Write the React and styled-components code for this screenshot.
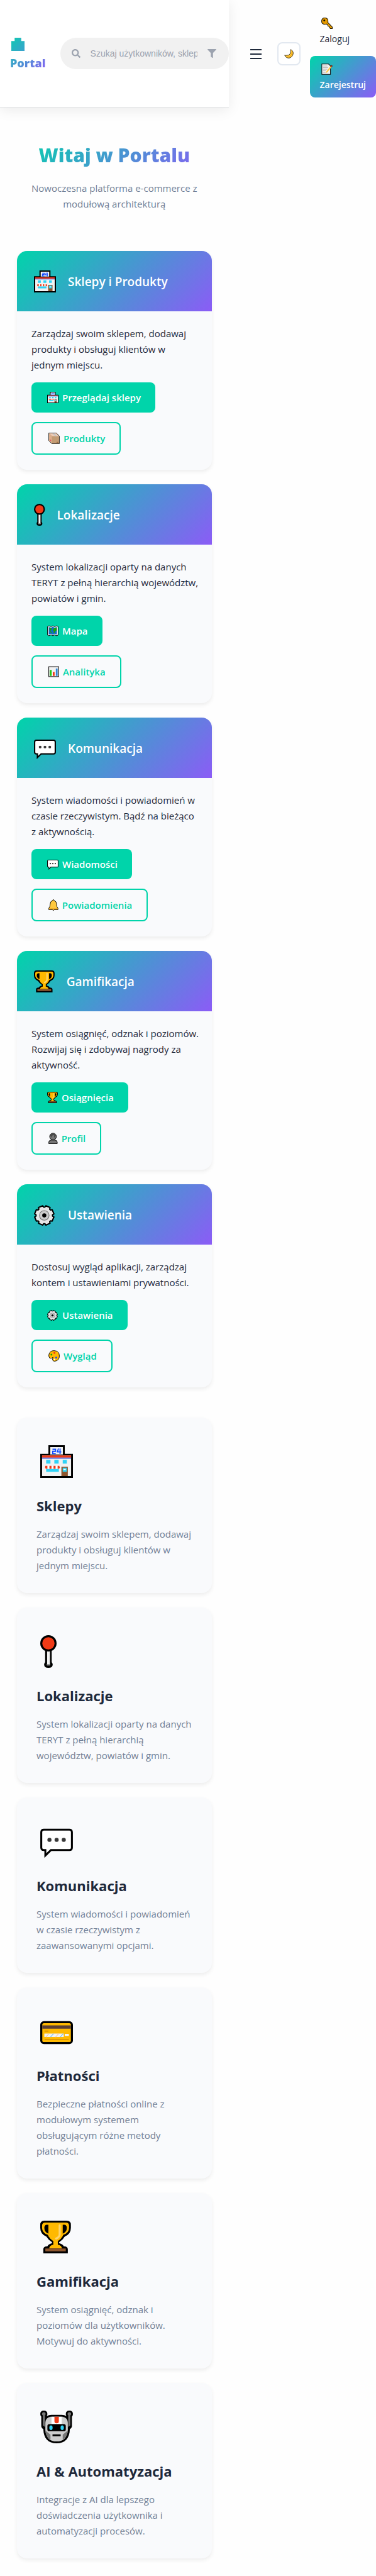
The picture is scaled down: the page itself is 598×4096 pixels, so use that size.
import React from "react";
import styled, { createGlobalStyle, css } from "styled-components";
import { FaFilter, FaSearch } from "react-icons/fa";

const ink = "#1e293b";
const muted = "#718096";
const mint = "#00d4aa";
const gradient = "linear-gradient(135deg, #00d4aa 0%, #8b5cf6 100%)";
const contentWidth = "60.8%";

const GlobalStyle = createGlobalStyle`
  * { box-sizing: border-box; }
  body {
    margin: 0;
    background: #fefefe;
    color: ${ink};
    font-family: "Open Sans", "Noto Sans", sans-serif;
    font-size: 15px;
    line-height: 25px;
  }
  h1, h2, h3, p { margin: 0; }
  a { color: inherit; text-decoration: none; }
  button { font: inherit; color: inherit; cursor: pointer; }
`;

/* ---------- icons ---------- */

const Glyph = styled.svg`
  display: block;
  flex: none;
  height: ${(p) => p.$size}px;
  width: auto;
`;

const Shop = ({ size }) => (
  <Glyph $size={size} viewBox="0 0 32 32" aria-hidden="true">
    <path d="M8 0h16v8.4h8V32H0V8.4h8z" fill="#000" />
    <path d="M9.8 1.8h12.4v7.2H9.8zM1.8 10h28.4v20.2H1.8z" fill="#f2f2f2" />
    <path d="M1.8 10h28.4v2.1H1.8z" fill="#f03a17" />
    <path d="M1.8 12.1h28.4v1H1.8z" fill="#2347e0" />
    <path d="M12 4h3v2h-2.8v2.2h3M17.8 3.3l-1 3.3h3.8M19.4 3.2v5.4" fill="none" stroke="#1049ff" strokeWidth="1.1" />
    <path d="M5.8 14.3H10V18H5.8zM13.8 14.3H18V18h-4.2zM22 14.3h4V18h-4zM5.8 23h12.4v3H5.8z" fill="#2fd3f7" />
    <path d="M5 20.2h14V23H5z" fill="#fff" />
    <path d="M5 20.2h2V23H6q-1.3 0-1.3-1.4zM9 20.2h2V23H9zM13 20.2h2V23h-2zM17 20.2h1.6l.6 1.5q0 1.3-1.2 1.3h-1z" fill="#f03a17" />
    <path d="M20.7 21H27v9.2h-6.3z" fill="#8e562e" />
    <path d="M22 22h4v4h-4z" fill="#2fd3f7" />
    <path d="M22.8 23.2h2.2v1h-2.2z" fill="#fff" />
  </Glyph>
);

const Pin = ({ size }) => (
  <Glyph $size={size} viewBox="0 0 16 32" aria-hidden="true">
    <path d="M4.8 14h6.4v12.4q1 .8 1 2.4 0 3.2-4.2 3.2t-4.2-3.2q0-1.6 1-2.4z" fill="#000" />
    <path d="M6.7 12h2.8v17h-2.8z" fill="#f2f2f2" />
    <path d="M6.4 29h3.2" stroke="#999" strokeWidth="1.4" />
    <circle cx="8" cy="8" r="7" fill="#f03a17" stroke="#000" strokeWidth="2" />
  </Glyph>
);

const Bubble = ({ size }) => (
  <Glyph $size={size} viewBox="0 0 32 32" aria-hidden="true">
    <path d="M3.5 4.5h25q2.5 0 2.5 2.5v15q0 2.5-2.5 2.5H10.4L5 29.8V24.5H3.5Q1 24.5 1 22V7q0-2.5 2.5-2.5z" fill="#fff" stroke="#000" strokeWidth="1.9" />
    <g fill="#383838">
      <circle cx="9" cy="14.5" r="2" />
      <circle cx="16" cy="14.5" r="2" />
      <circle cx="23" cy="14.5" r="2" />
    </g>
  </Glyph>
);

const Trophy = ({ size }) => (
  <Glyph $size={size} viewBox="0 0 30 32" aria-hidden="true">
    <path d="M4 0h22q4 0 4 4v3q0 6-6 8.5-2 3.5-5.5 5.5v1q3.5 1 4.500 3 4 0 4 3v4H3v-4q0-3 4-3 1-2 4.500-3v-1Q8 19 6 15.500 0 13 0 7V4q0-4 4-4z" fill="#000" />
    <path d="M5 1.800h20q3.200 0 3.200 3V7q0 5-5.700 6.800Q21 18 17.200 20v3.500q3.800.8 4 3.500H8.800q.2-2.700 4-3.500V20Q9 18 7.500 13.800 1.800 12 1.800 7V4.800q0-3 3.200-3z" fill="#ffb900" />
    <path d="M8 4H6Q4 4.500 4 7q0 4 4 5.800zM22 4h2q2 .5 2 3 0 4-4 5.800z" fill="#000" />
    <path d="M19 4.500v9q0 2.500-3.500 4" fill="none" stroke="#ffd56b" strokeWidth="2" strokeLinecap="round" />
    <path d="M5 30v-2.800h20V30z" fill="#8e562e" />
  </Glyph>
);

const gearPath = (() => {
  const points = [];
  for (let i = 0; i < 8; i += 1) {
    [[-4, 12], [4, 12], [9, 14.2], [36, 14.2], [41, 12]].forEach(([deg, r]) => {
      const a = ((i * 45 + deg) * Math.PI) / 180;
      points.push(`${(16 + r * Math.sin(a)).toFixed(2)} ${(16 - r * Math.cos(a)).toFixed(2)}`);
    });
  }
  return `M${points.join("L")}Z`;
})();

const Gear = ({ size }) => (
  <Glyph $size={size} viewBox="1 0 32 32" aria-hidden="true">
    <path d={gearPath} transform="translate(0 1)" fill="#e6e6e6" stroke="#000" strokeWidth="1.9" strokeLinejoin="round" />
    <circle cx="16" cy="17" r="7" fill="#ccc" stroke="#767676" strokeWidth="1" />
    <circle cx="16" cy="17" r="3" fill="#000" />
  </Glyph>
);

const CreditCard = ({ size }) => (
  <Glyph $size={size} viewBox="0 0 32 32" aria-hidden="true">
    <rect x="1" y="7" width="30" height="20.5" rx="2.6" fill="#ffb900" stroke="#000" strokeWidth="2" />
    <path d="M2 10.2h28v3.2H2z" fill="#5c3f34" />
    <path d="M4.2 15.8H8M4.2 24H28" stroke="#d88f00" strokeWidth="1" />
    <path d="M4 18.2h19v3.4H4zM24 18.4h4v2h-4z" fill="#f2f2f2" />
    <path d="M5.5 21.6l3-3.4M15 21.6l3-3.4" stroke="#f6c9a0" strokeWidth=".8" />
    <path d="M10 21.6l3-3.4M19.5 21.6l3-3.4" stroke="#7cc4ea" strokeWidth=".8" />
  </Glyph>
);

const Robot = ({ size }) => (
  <Glyph $size={size} viewBox="0 0 32 32" aria-hidden="true">
    <path d="M3.5 0Q7 0 7 3.4q0 1.3-.8 2.2Q8.5 4.2 11 4.2h10q2.5 0 4.8 1.4-.8-.9-.8-2.2Q25 0 28.5 0T32 3.4q0 1.5-1 2.4V15q0 2-2 3Q28.5 32 16 32T3 18q-2-1-2-3V5.8Q0 4.9 0 3.4 0 0 3.5 0z" fill="#000" />
    <circle cx="3.5" cy="3.3" r="1.7" fill="#767676" />
    <circle cx="28.5" cy="3.3" r="1.7" fill="#767676" />
    <path d="M2.6 4.5h2V16l-2-1.5zM29.4 4.5h-2V16l2-1.5z" fill="#767676" />
    <path d="M10 6h12q5 1 5 6v7q-1 11.2-11 11.2T5 19v-7q0-5 5-6z" fill="#ccc" />
    <path d="M5 19.5l5 4v5Q5.2 25.5 5 19.5zM27 19.5l-5 4v5q4.8-3 5-9z" fill="#767676" />
    <path d="M11 6h10v7H11z" fill="#fff" />
    <path d="M13.9 6h4.3v4.4q0 2-2.15 2t-2.15-2z" fill="#f03a17" />
    <rect x="7" y="13.2" width="18" height="7" rx="1.8" fill="#000" />
    <ellipse cx="10.5" cy="16.7" rx="1.6" ry="2.3" fill="#2fd3f7" />
    <ellipse cx="21.5" cy="16.7" rx="1.6" ry="2.3" fill="#2fd3f7" />
    <path d="M12 23.3h8v1.8h-8z" fill="#000" />
  </Glyph>
);

const Box = ({ size }) => (
  <Glyph $size={size} viewBox="0 0 32 32" aria-hidden="true">
    <path d="M1 1h21.5L31 9.5V31H9.5L1 22.5z" fill="#c29b73" stroke="#222" strokeWidth="1.6" />
    <path d="M1.8 1.8H22L30 9.8H10z" fill="#eccab4" />
    <path d="M1.8 2.5L9.8 10v20L1.8 22z" fill="#dcae8c" />
    <path d="M11 1.8h5l8 8h-5z" fill="#c5c5c5" />
    <path d="M4 18l3.5 3.5v3L4 21z" fill="#e8425a" />
    <path d="M23 26h5v2h-5z" fill="#8e562e" />
  </Glyph>
);

const WorldMap = ({ size }) => (
  <Glyph $size={size} viewBox="0 0 32 32" aria-hidden="true">
    <path d="M1 4l4-2 6 2 5-2 5 2 6-2 4 2v24l-4 2-6-2.5-5 2.5-5-2.5L5 30l-4-2z" fill="#f2f2f2" stroke="#000" strokeWidth="1.7" />
    <path d="M4.5 5.5l6.5 1.5 5-2 5 2 6.5-1.5v21L21 24.5 16 27l-5-2.5-6.5 2z" fill="#0f6cc9" />
    <path d="M6 8l7 1-1 4-3 3 4 4-1 4-3-5-2-5zM17 11l4-3 6-1v8l-4 2-2 6-3-2 1-5-3-1z" fill="#16a10b" />
  </Glyph>
);

const BarChart = ({ size }) => (
  <Glyph $size={size} viewBox="0 0 30 32" aria-hidden="true">
    <rect x="1" y="2" width="28" height="28" fill="#f2f2f2" stroke="#111" strokeWidth="1.9" />
    <path d="M4 11h5v17H4z" fill="#16c60c" />
    <path d="M12.5 17h5v11h-5z" fill="#f03a17" />
    <path d="M21 7h5v21h-5z" fill="#2f86d8" />
  </Glyph>
);

const Bell = ({ size }) => (
  <Glyph $size={size} viewBox="0 0 28 32" aria-hidden="true">
    <path d="M14 1q2 0 2 2.3 7 2 7 9.7 0 8 4 12.5V29H17q-1 2-3 2t-3-2H1v-3.5Q5 21 5 13q0-7.7 7-9.7Q12 1 14 1z" fill="#ffc83d" stroke="#000" strokeWidth="1.6" />
    <path d="M1.8 26h24.4v2.2H1.8z" fill="#d67d00" />
  </Glyph>
);

const Person = ({ size }) => (
  <Glyph $size={size} viewBox="0 0 26 32" aria-hidden="true">
    <path d="M1 31v-4q0-5 6-6h12q6 1 6 6v4z" fill="#767676" stroke="#000" strokeWidth="1.6" />
    <circle cx="13" cy="11" r="9.5" fill="#767676" stroke="#000" strokeWidth="1.6" />
    <path d="M4 10Q5 2 13 2t9 8Q17 10 14 6.5 10 10 4 10z" fill="#4a4a4a" />
    <path d="M9 10.5v2.5M17 10.5v2.5" stroke="#111" strokeWidth="1.5" />
  </Glyph>
);

const Palette = ({ size }) => (
  <Glyph $size={size} viewBox="0 0 32 32" aria-hidden="true">
    <path d="M16 1q15 1 15 15 0 13-13 15-5 0-6-3-1-4 1-8Q11 23 4 22.5 1 19 1 14 3 1 16 1z" fill="#ffb900" stroke="#000" strokeWidth="1.6" />
    <circle cx="8.5" cy="12.5" r="2.6" fill="#16a10b" />
    <circle cx="17" cy="7.5" r="2.6" fill="#f03a17" />
    <circle cx="22" cy="21" r="2.6" fill="#1049ff" />
    <circle cx="17" cy="26" r="2.2" fill="#fff" />
  </Glyph>
);

const Key = ({ size }) => (
  <Glyph $size={size} viewBox="0 0 32 32" aria-hidden="true">
    <path d="M10 1q9 0 9 9 0 2-.7 3.5L31 26.5V31h-5l-3-3-1-3-3-1-1-3-3.500-3q-2 1-4.500 1-9 0-9-9 0-9 9-9z" fill="#e59a00" stroke="#1a1200" strokeWidth="1.8" />
    <circle cx="8.5" cy="8" r="2.6" fill="#1a1200" />
  </Glyph>
);

const Memo = ({ size }) => (
  <Glyph $size={size} viewBox="0 0 32 32" aria-hidden="true">
    <path d="M1.5 1.5h19L26 7v23.5H1.5z" fill="#f2f2f2" stroke="#111" strokeWidth="1.8" />
    <path d="M5 7h12M5 11.5h14M5 16h12M5 20.5h8M5 25h7" stroke="#a0a0a0" strokeWidth="1.3" />
    <path d="M13.5 23.5L26 7.5l3 2.5-12.5 15.5-3.5 1z" fill="#ffc83d" />
    <path d="M26 7.5l2-2.5q3-.5 3 2.5l-2 2.5z" fill="#f03a17" stroke="#111" />
  </Glyph>
);

const Moon = ({ size }) => (
  <Glyph $size={size} viewBox="0 0 32 32" aria-hidden="true">
    <path d="M22 1.5Q31 6 30.5 15 29 27 17 30.5 6 31 1.5 21q5 1.5 8 0 6 1.5 10-4 4-6 2.5-15.5z" fill="#ffc83d" stroke="#2a1c00" strokeWidth="1.8" strokeLinejoin="round" />
    <path d="M26 9q1 8-4 14-5 4-11 3.5" fill="none" stroke="#f0a000" strokeWidth="1.6" />
  </Glyph>
);

const Store = ({ size }) => (
  <Glyph $size={size} viewBox="0 0 32 32" aria-hidden="true">
    <defs>
      <linearGradient id="store-fill" x1="0" y1="0" x2="1" y2="1">
        <stop offset="0" stopColor="#10c9b2" />
        <stop offset="1" stopColor="#3aa2cd" />
      </linearGradient>
    </defs>
    <path d="M8 0h16v8h8v24H0V8h8z" fill="url(#store-fill)" />
  </Glyph>
);

/* ---------- header ---------- */

const Header = styled.header`
  display: flex;
  align-items: stretch;
`;

const HeaderBar = styled.div`
  flex: 0 0 ${contentWidth};
  min-width: 0;
  display: flex;
  align-items: center;
  gap: 23px;
  padding: 16px 0 16px 16px;
  background: #fff;
  border-bottom: 1px solid #e2e4e6;
  box-shadow: 0 4px 20px rgba(0, 0, 0, 0.08);
`;

const Brand = styled.a`
  display: flex;
  flex-direction: column;
  font-size: 18px;
  font-weight: 800;
  line-height: 30px;
  background: ${gradient};
  background-clip: text;
  color: transparent;
`;

const BrandMark = styled.span`
  display: flex;
  align-items: center;
  height: 30px;
  padding-left: 2px;
`;

const SearchBox = styled.form`
  flex: 1;
  min-width: 0;
  display: flex;
  align-items: center;
  gap: 16px;
  height: 50px;
  padding: 0 20px 0 18px;
  border-radius: 25px;
  background: #f1f1f1;
  color: #9ca3af;
`;

const SearchLabel = styled.label`
  display: flex;
  font-size: 14px;
`;

const SearchInput = styled.input`
  flex: 1;
  min-width: 0;
  width: 0;
  padding: 0;
  border: 0;
  outline: 0;
  background: none;
  color: ${ink};
  font: 14px "Liberation Sans", Arial, sans-serif;
  &::placeholder {
    color: #9ca3af;
    opacity: 1;
  }
`;

const IconButton = styled.button`
  display: flex;
  align-items: center;
  justify-content: center;
  padding: 0;
  border: 0;
  background: none;
  font-size: 14px;
`;

const Actions = styled.nav`
  flex: 1;
  display: flex;
  align-items: center;
  justify-content: flex-end;
  gap: 15px;
  padding: 16px 0;
`;

const MenuButton = styled(IconButton)`
  width: 37px;
  height: 37px;
`;

const ThemeButton = styled(IconButton)`
  width: 37px;
  height: 37px;
  border: 2px solid #e2e8f0;
  border-radius: 8px;
  background: #fff;
`;

const AuthLinks = styled.div`
  display: flex;
  flex-direction: column;
  gap: 7px;
`;

const AuthLink = styled.a`
  display: flex;
  flex-direction: column;
  padding: 8px 16px;
  border-radius: 8px;
  font-size: 14px;
  font-weight: 500;
  ${(p) =>
    p.$primary &&
    css`
      background: ${gradient};
      color: #fff;
      font-weight: 600;
    `}
`;

const AuthIcon = styled.span`
  display: flex;
  align-items: center;
  height: 25px;
  padding-left: 2px;
`;

/* ---------- page ---------- */

const Main = styled.main`
  width: ${contentWidth};
  padding: 27px;
`;

const Hero = styled.section`
  display: flex;
  flex-direction: column;
  gap: 16px;
  padding: 25px 0 62px;
  text-align: center;
`;

const HeroTitle = styled.h1`
  font-size: 30px;
  font-weight: 800;
  line-height: 48px;
  background: ${gradient};
  background-clip: text;
  color: transparent;
`;

const Lines = styled.p`
  white-space: pre;
  color: ${(p) => (p.$muted ? muted : ink)};
`;

const CardList = styled.section`
  display: flex;
  flex-direction: column;
  gap: 23px;
  & + & {
    margin-top: 48px;
  }
`;

const Card = styled.article`
  border-radius: 16px;
  background: #f9fafc;
  box-shadow: 0 3px 6px rgba(0, 0, 0, 0.07);
  overflow: hidden;
`;

const CardHeader = styled.header`
  display: flex;
  align-items: center;
  gap: 19px;
  padding: 31px 27px 30px;
  background: ${gradient};
  color: #fff;
`;

const CardTitle = styled.h2`
  font-size: 19px;
  font-weight: 600;
  line-height: 30px;
`;

const CardBody = styled.div`
  display: flex;
  flex-direction: column;
  align-items: flex-start;
  gap: 15px;
  padding: 23px 23px 24px;
`;

const ActionLink = styled.a`
  display: flex;
  align-items: center;
  gap: 6px;
  height: 48px;
  padding: 0 23px 0 25px;
  border-radius: 8px;
  background: ${mint};
  color: #fff;
  font-weight: 600;
  ${(p) =>
    p.$outline &&
    css`
      height: 52px;
      border: 2px solid ${mint};
      background: none;
      color: ${mint};
    `}
`;

const Feature = styled(Card)`
  display: flex;
  flex-direction: column;
  gap: 15px;
  padding: 31px;
`;

const FeatureIcon = styled.div`
  padding: 13px 6px 12px;
`;

const FeatureTitle = styled.h3`
  font-size: 22px;
  font-weight: 700;
  line-height: 35px;
`;

/* ---------- content ---------- */

const modules = [
  {
    icon: Shop,
    title: "Sklepy i Produkty",
    text: "Zarządzaj swoim sklepem, dodawaj\nprodukty i obsługuj klientów w\njednym miejscu.",
    actions: [[Shop, "Przeglądaj sklepy"], [Box, "Produkty"]],
  },
  {
    icon: Pin,
    title: "Lokalizacje",
    text: "System lokalizacji oparty na danych\nTERYT z pełną hierarchią województw,\npowiatów i gmin.",
    actions: [[WorldMap, "Mapa"], [BarChart, "Analityka"]],
  },
  {
    icon: Bubble,
    title: "Komunikacja",
    text: "System wiadomości i powiadomień w\nczasie rzeczywistym. Bądź na bieżąco\nz aktywnością.",
    actions: [[Bubble, "Wiadomości"], [Bell, "Powiadomienia"]],
  },
  {
    icon: Trophy,
    title: "Gamifikacja",
    text: "System osiągnięć, odznak i poziomów.\nRozwijaj się i zdobywaj nagrody za\naktywność.",
    actions: [[Trophy, "Osiągnięcia"], [Person, "Profil"]],
  },
  {
    icon: Gear,
    title: "Ustawienia",
    text: "Dostosuj wygląd aplikacji, zarządzaj\nkontem i ustawieniami prywatności.",
    actions: [[Gear, "Ustawienia"], [Palette, "Wygląd"]],
  },
];

const features = [
  {
    icon: Shop,
    title: "Sklepy",
    text: "Zarządzaj swoim sklepem, dodawaj\nprodukty i obsługuj klientów w\njednym miejscu.",
  },
  {
    icon: Pin,
    title: "Lokalizacje",
    text: "System lokalizacji oparty na danych\nTERYT z pełną hierarchią\nwojewództw, powiatów i gmin.",
  },
  {
    icon: Bubble,
    title: "Komunikacja",
    text: "System wiadomości i powiadomień\nw czasie rzeczywistym z\nzaawansowanymi opcjami.",
  },
  {
    icon: CreditCard,
    title: "Płatności",
    text: "Bezpieczne płatności online z\nmodułowym systemem\nobsługującym różne metody\npłatności.",
  },
  {
    icon: Trophy,
    title: "Gamifikacja",
    text: "System osiągnięć, odznak i\npoziomów dla użytkowników.\nMotywuj do aktywności.",
  },
  {
    icon: Robot,
    title: "AI & Automatyzacja",
    text: "Integracje z AI dla lepszego\ndoświadczenia użytkownika i\nautomatyzacji procesów.",
  },
];

export default function App() {
  return (
    <>
      <GlobalStyle />
      <Header>
        <HeaderBar>
          <Brand href="#">
            <BrandMark>
              <Store size={21} />
            </BrandMark>
            Portal
          </Brand>
          <SearchBox role="search">
            <SearchLabel htmlFor="search" aria-label="Szukaj">
              <FaSearch />
            </SearchLabel>
            <SearchInput id="search" type="text" placeholder="Szukaj użytkowników, sklepów..." />
            <IconButton type="button" aria-label="Filtry">
              <FaFilter />
            </IconButton>
          </SearchBox>
        </HeaderBar>
        <Actions>
          <MenuButton type="button" aria-label="Menu">
            <svg width="18" height="18" viewBox="0 0 18 18" aria-hidden="true">
              <path d="M0 2h18M0 9h18M0 16h18" stroke={ink} strokeWidth="2" />
            </svg>
          </MenuButton>
          <ThemeButton type="button" aria-label="Motyw">
            <Moon size={15} />
          </ThemeButton>
          <AuthLinks>
            <AuthLink href="#">
              <AuthIcon>
                <Key size={18} />
              </AuthIcon>
              Zaloguj
            </AuthLink>
            <AuthLink href="#" $primary>
              <AuthIcon>
                <Memo size={18} />
              </AuthIcon>
              Zarejestruj
            </AuthLink>
          </AuthLinks>
        </Actions>
      </Header>
      <Main>
        <Hero>
          <HeroTitle>Witaj w Portalu</HeroTitle>
          <Lines $muted>{"Nowoczesna platforma e-commerce z\nmodułową architekturą"}</Lines>
        </Hero>
        <CardList>
          {modules.map(({ icon: Icon, title, text, actions }) => (
            <Card key={title}>
              <CardHeader>
                <Icon size={35} />
                <CardTitle>{title}</CardTitle>
              </CardHeader>
              <CardBody>
                <Lines>{text}</Lines>
                {actions.map(([ActionIcon, label], i) => (
                  <ActionLink key={label} href="#" $outline={i === 1}>
                    <ActionIcon size={18} />
                    {label}
                  </ActionLink>
                ))}
              </CardBody>
            </Card>
          ))}
        </CardList>
        <CardList>
          {features.map(({ icon: Icon, title, text }) => (
            <Feature key={title}>
              <FeatureIcon>
                <Icon size={52} />
              </FeatureIcon>
              <FeatureTitle>{title}</FeatureTitle>
              <Lines $muted>{text}</Lines>
            </Feature>
          ))}
        </CardList>
      </Main>
    </>
  );
}
